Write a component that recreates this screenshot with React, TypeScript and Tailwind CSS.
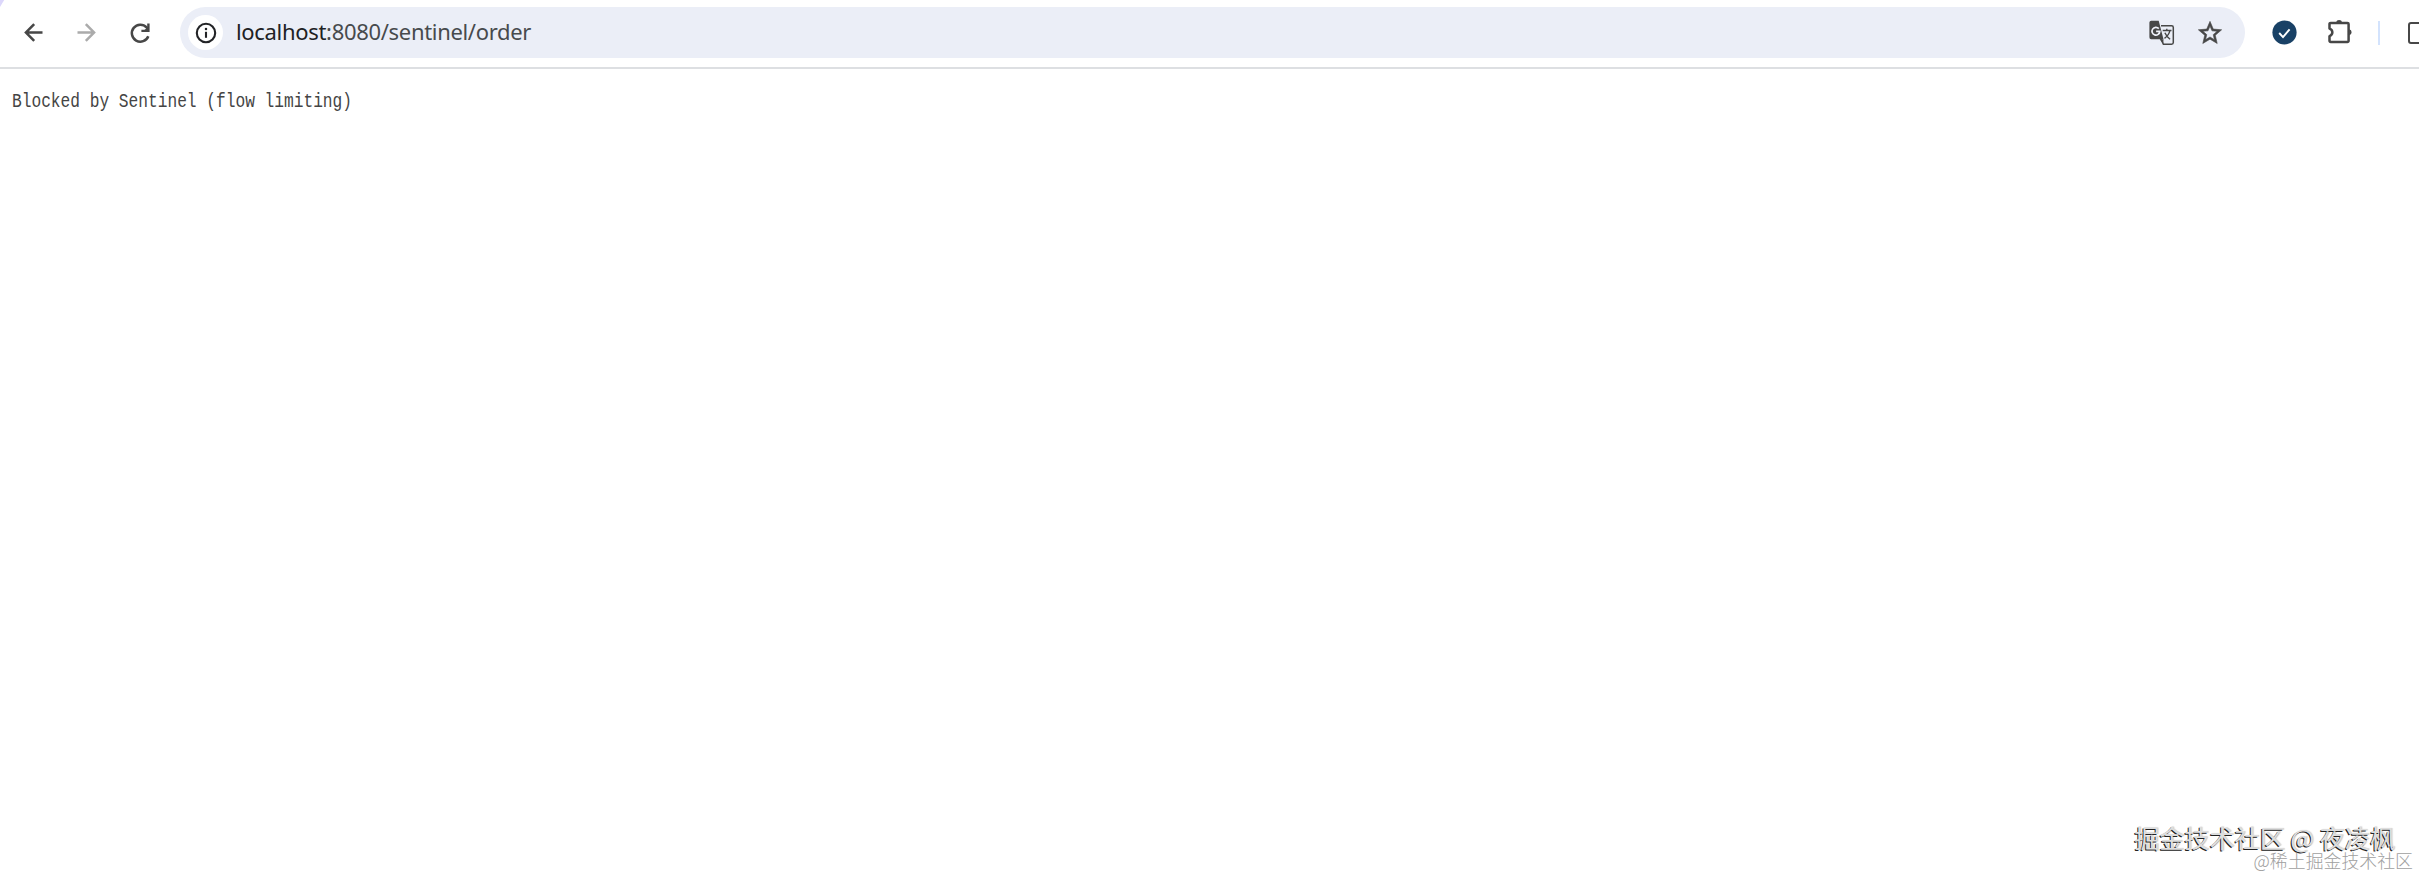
interface ArrowProps {
	className?: string;
}

const BackArrow = ({ className = '' }: ArrowProps) => (
	<svg viewBox="0 0 24 24" fill="currentColor" className={`size-[27px] ${className}`}>
		<path d="M20 10.8H7.9l5.5-5.4L11.8 3.8 3.7 12l8.1 8.2 1.6-1.6-5.5-5.4H20v-2.4z" />
	</svg>
);

const Reload = () => (
	<svg viewBox="0 0 28 28" fill="none" className="size-7">
		<path d="M22.3 17.2A8.5 8.5 0 1 1 20.6 8.4L22 10" stroke="#474747" strokeWidth="2.5" />
		<path d="M22.4 4.6v7.3H15.4" stroke="#474747" strokeWidth="2.4" />
		<path d="M22.4 7.5v4.5h-5z" fill="#474747" />
	</svg>
);

const SiteInfo = () => (
	<div className="flex size-[35px] items-center justify-center rounded-full bg-white">
		<svg viewBox="0 0 22 22" fill="none" className="size-[22px]">
			<circle cx="11" cy="11" r="9.2" stroke="#222326" strokeWidth="2.1" />
			<path d="M11 9.8v6" stroke="#222326" strokeWidth="2.1" />
			<circle cx="11" cy="6.9" r="1.25" fill="#222326" />
		</svg>
	</div>
);

const Translate = () => (
	<svg viewBox="0 0 26 26" fill="none" className="size-[26px]">
		<path d="M12 5.7h10.6a1.7 1.7 0 0 1 1.7 1.7v15.2a1.7 1.7 0 0 1-1.7 1.7h-8.2L11 17" stroke="#474747" strokeWidth="1.5" />
		<path d="M2.2.8h7.5l4.8 18.4H2.2A1.9 1.9 0 0 1 .4 17.3V2.6A1.9 1.9 0 0 1 2.2.8z" fill="#474747" />
		<path d="M10.7 19.2h3.8l-.2 4.9z" fill="#474747" />
		<path d="M9.8 8.6a3.9 3.9 0 1 0 1 2.8H7.1" stroke="#eef0f8" strokeWidth="1.7" />
		<path d="M13.7 10.5h8.8M17.8 8.7v1.8M20.9 10.7c-.7 3.2-2.6 5.7-5.4 7.6M15.9 12.7c1.1 2.6 2.7 4.7 5.2 6.6" stroke="#474747" strokeWidth="1.4" />
	</svg>
);

const Star = () => (
	<svg viewBox="0 0 24 24" fill="#474747" stroke="#474747" strokeWidth="0.5" className="size-7">
		<path d="M22 9.24l-7.19-.62L12 2 9.19 8.63 2 9.24l5.46 4.73L5.82 21 12 17.27 18.18 21l-1.63-7.03L22 9.24zM12 15.4l-3.76 2.27 1-4.28-3.32-2.88 4.38-.38L12 6.1l1.71 4.04 4.38.38-3.32 2.88 1 4.28L12 15.4z" />
	</svg>
);

const CheckBadge = () => (
	<svg viewBox="0 0 25 25" fill="none" className="size-[25px]">
		<circle cx="12.5" cy="12.5" r="12.1" fill="#194166" />
		<path d="M7.2 13l3.8 4.1 6.6-7.8" stroke="#fff" strokeWidth="1.9" />
	</svg>
);

const Puzzle = () => (
	<svg viewBox="0 0 26 26" fill="none" className="size-[26px]">
		<path
			d="M3.7 4.9H20.4a1.2 1.2 0 0 1 1.2 1.2v16.6a1.2 1.2 0 0 1-1.2 1.2H3.7a1.2 1.2 0 0 1-1.2-1.2v-4.6c3.8-1.2 3.8-6.3 0-7.5V6.1a1.2 1.2 0 0 1 1.2-1.2z"
			stroke="#474747"
			strokeWidth="2.5"
			strokeLinejoin="round"
		/>
		<path d="M9 4.4a3.2 3.2 0 0 1 6.2 0zM22.2 11.2a3.2 3.2 0 0 1 0 6.2z" fill="#474747" />
	</svg>
);

const Toolbar = () => {
	return (
		<header className="flex h-[69px] items-start overflow-hidden border-b-2 border-[#dddfe2] pt-[7px]">
			<div className="flex h-[51px] w-[180px] flex-shrink-0 items-center pl-5">
				<BackArrow className="text-[#474747]" />
				<BackArrow className="ml-[26px] rotate-180 text-[#ababab]" />
				<div className="ml-[26px]">
					<Reload />
				</div>
			</div>
			<div className="flex h-[51px] w-[2065px] flex-shrink-0 items-center rounded-full bg-[#ebeef7] pl-2 pr-[21px]">
				<SiteInfo />
				<span className="ml-[13px] flex-grow pb-[3px] font-['Noto_Sans',sans-serif] text-[22px] leading-[30px] tracking-[-0.32px] text-[#474a4d]">
					<span className="text-[#202124]">localhost</span>:8080/sentinel/order
				</span>
				<Translate />
				<div className="ml-[21px]">
					<Star />
				</div>
			</div>
			<div className="flex h-[51px] flex-shrink-0 items-center pl-[27px]">
				<CheckBadge />
				<div className="ml-[30px] pb-[3px]">
					<Puzzle />
				</div>
				<div className="ml-[25px] h-6 w-[2px] bg-[#d3e3fd]" />
				<div className="ml-[28px] h-[22px] w-[27px] flex-shrink-0 rounded-[3px] border-[2.5px] border-[#474747]" />
			</div>
		</header>
	);
};

const App = () => {
	return (
		<div className="relative h-[876px] w-[2419px] overflow-hidden bg-white">
			<div className="absolute left-0 top-0 size-[7px] bg-[#dcd7fb] [clip-path:polygon(0_0,60%_0,0_100%)]" />
			<Toolbar />
			<main className="pl-3 pt-[21px]">
				<pre className="origin-[0_70%] scale-y-[1.22] font-['Liberation_Mono',monospace] text-[16.2px] leading-[26px] text-[#444]">
					Blocked by Sentinel (flow limiting)
				</pre>
			</main>
			<div className="absolute right-[24px] top-[819px] whitespace-nowrap font-['Noto_Sans_CJK_SC',sans-serif] text-[25.1px] leading-[36px] text-[#dedede] [text-shadow:-1px_1px_0.5px_#222,1px_0_1px_#ccc]">
				掘金技术社区 @ 夜凌枫
			</div>
			<div className="absolute right-[6px] top-[847px] whitespace-nowrap font-['Noto_Sans_CJK_SC',sans-serif] text-[17.9px] font-light leading-[26px] text-[#a0a0a0]">
				@稀土掘金技术社区
			</div>
		</div>
	);
};

export default App;
